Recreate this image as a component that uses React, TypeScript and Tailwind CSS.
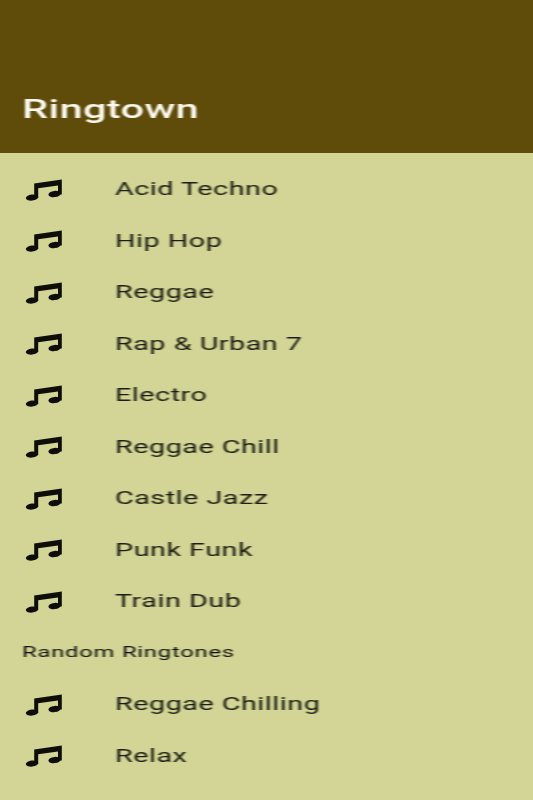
function NoteIcon() {
  return (
    <svg width="38" height="24" viewBox="0 0 38 24" className="shrink-0 blur-[0.5px]" fill="#0f0e06">
      <path d="M9.2 6.4 L36.8 2.4 L36.8 17.5 L33 17.5 L33 8.4 L13.2 11.2 L13.2 21 L9.2 21 Z" />
      <ellipse cx="7" cy="20.6" rx="6.2" ry="3" transform="rotate(-6 7 20.6)" />
      <ellipse cx="29.6" cy="17" rx="6.2" ry="3.1" transform="rotate(-6 29.6 17)" />
    </svg>
  );
}

function Row({ label }: { label: string }) {
  return (
    <div className="flex h-[51.5px] items-center pl-[25px]">
      <NoteIcon />
      <span className="ml-[52px] origin-left scale-x-[1.6] whitespace-nowrap font-['Roboto',sans-serif] text-[18px] tracking-[0.3px] text-[#1c1c10] blur-[0.6px]">
        {label}
      </span>
    </div>
  );
}

const genres = [
  "Acid Techno",
  "Hip Hop",
  "Reggae",
  "Rap & Urban 7",
  "Electro",
  "Reggae Chill",
  "Castle Jazz",
  "Punk Funk",
  "Train Dub",
];

export default function App() {
  return (
    <div className="flex h-[800px] w-[533px] flex-col overflow-hidden bg-[#d2d596]">
      <header className="flex h-[153px] shrink-0 items-end bg-[#5f4c0b] px-[22px] pb-[28px]">
        <h1 className="origin-left scale-x-[1.6] font-['Roboto',sans-serif] text-[26px] font-medium leading-[32px] tracking-[0.2px] text-[#fbf9ee] blur-[0.5px]">
          Ringtown
        </h1>
      </header>
      <div className="pt-[10px]">
        {genres.map((g) => (
          <Row key={g} label={g} />
        ))}
        <div className="flex h-[51.5px] items-center pl-[22px]">
          <span className="origin-left scale-x-[1.7] whitespace-nowrap font-['Roboto',sans-serif] text-[14px] tracking-[0.45px] text-[#12110a] blur-[0.5px]">
            Random Ringtones
          </span>
        </div>
        <Row label="Reggae Chilling" />
        <Row label="Relax" />
      </div>
    </div>
  );
}
